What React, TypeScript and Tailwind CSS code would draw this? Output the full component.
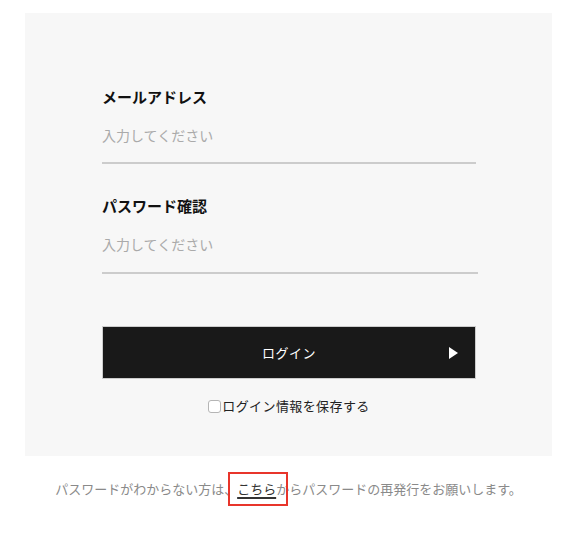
import React from "react";

export default function App() {
  const font = { fontFamily: '"Noto Sans CJK JP", "Noto Sans", sans-serif' };
  return (
    <div className="w-[567px] h-[534px] bg-white pt-[13px] pl-[25px]" style={font}>
      <div className="w-[527px] h-[443px] bg-[#f7f7f7] pt-[73px] pl-[77px]">
        <div className="w-[374px] flex flex-col">
          <div className="text-[15px] font-bold text-[#111] leading-[22px]">メールアドレス</div>
          <div className="mt-[16px] text-[14px] text-[#aaa] leading-[22px]">入力してください</div>
          <div className="mt-[16px] h-[2px] bg-[#cccccc] w-[374px]" />
          <div className="mt-[31px] text-[15px] font-bold text-[#111] leading-[22px]">パスワード確認</div>
          <div className="mt-[16px] text-[14px] text-[#aaa] leading-[22px]">入力してください</div>
          <div className="mt-[17px] h-[2px] bg-[#cccccc] w-[376px]" />
          <div className="mt-[52px] h-[53px] bg-[#191919] border border-[#cccccc] relative flex items-center justify-center">
            <span className="text-white text-[13px] tracking-[0.5px]">ログイン</span>
            <svg className="absolute right-[17px] top-1/2 -translate-y-1/2" width="9" height="12" viewBox="0 0 9 12">
              <polygon points="0,0 9,6 0,12" fill="#ffffff" />
            </svg>
          </div>
          <div className="mt-[17px] flex items-center justify-center">
            <span className="w-[13px] h-[13px] border border-[#b5b5b5] rounded-[3px] bg-white mr-[1px]" />
            <span className="text-[13px] text-[#222] tracking-[0.4px] leading-[20px]">ログイン情報を保存する</span>
          </div>
        </div>
      </div>
      <div className="w-[527px] mt-[23px] text-center text-[13px] text-[#8a8a8a] tracking-[0px] leading-[20px]">
        パスワードがわからない方は、
        <span className="relative inline-block">
          <span className="text-[#333] underline underline-offset-[3px] decoration-[1.5px]">こちら</span>
          <span className="absolute left-[-9px] right-[-12px] top-[-7px] bottom-[-7px] border-2 border-[#e8352b]" />
        </span>
        からパスワードの再発行をお願いします。
      </div>
    </div>
  );
}
